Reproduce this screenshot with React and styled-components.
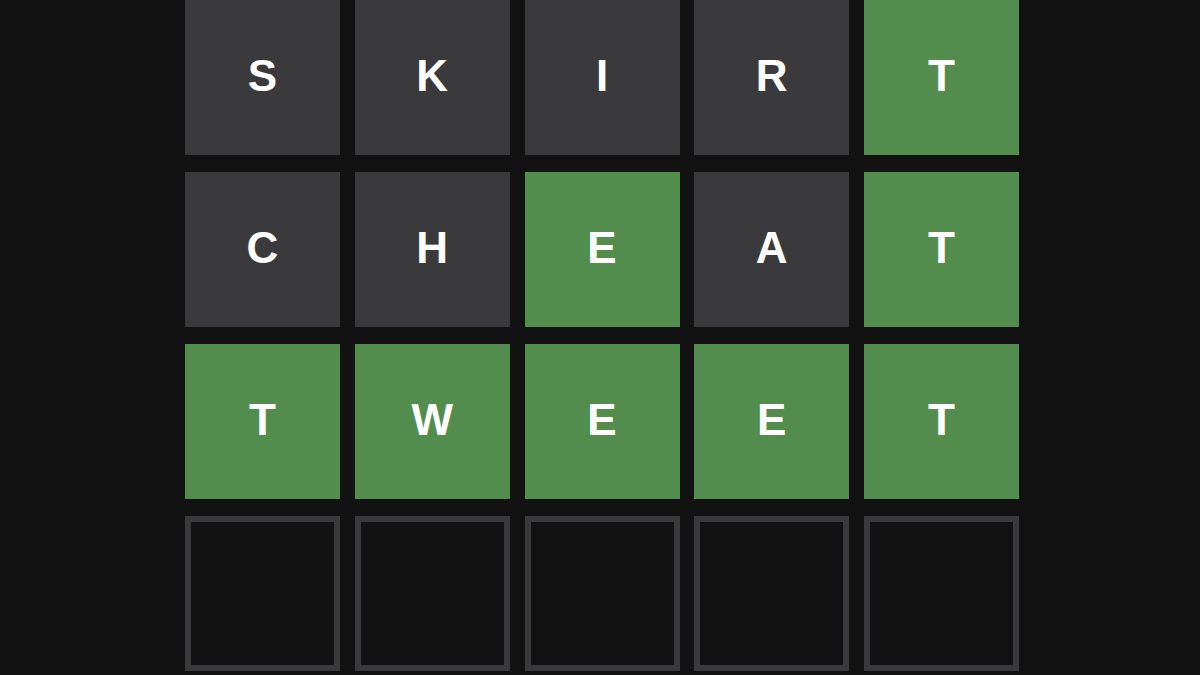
import React from "react";
import styled, { createGlobalStyle } from "styled-components";

const Global = createGlobalStyle`
  html, body { margin: 0; padding: 0; background: #121213; }
  body { width: 1200px; height: 675px; overflow: hidden; }
`;

const Page = styled.div`
  width: 1200px;
  height: 675px;
  background: #121213;
  padding-left: 185px;
  box-sizing: border-box;
`;

const Board = styled.div`
  display: grid;
  grid-template-columns: repeat(5, 155px);
  grid-auto-rows: 155px;
  column-gap: 14.75px;
  row-gap: 17px;
`;

const colors = {
  absent: "#3a3a3c",
  correct: "#538d4e",
};

const Tile = styled.div`
  box-sizing: border-box;
  display: flex;
  align-items: center;
  justify-content: center;
  background: ${(p) => (p.$state ? colors[p.$state] : "transparent")};
  border: ${(p) => (p.$state ? "none" : "6px solid #3a3a3c")};
  color: #ffffff;
  font-family: "Liberation Sans", Arial, sans-serif;
  font-weight: 700;
  font-size: 44px;
  line-height: 1;
  padding-bottom: 4px;
`;

const rows = [
  [["S", "absent"], ["K", "absent"], ["I", "absent"], ["R", "absent"], ["T", "correct"]],
  [["C", "absent"], ["H", "absent"], ["E", "correct"], ["A", "absent"], ["T", "correct"]],
  [["T", "correct"], ["W", "correct"], ["E", "correct"], ["E", "correct"], ["T", "correct"]],
  [["", null], ["", null], ["", null], ["", null], ["", null]],
];

export default function App() {
  return (
    <>
      <Global />
      <Page>
        <Board>
          {rows.flat().map(([l, s], i) => (
            <Tile key={i} $state={s}>
              {l}
            </Tile>
          ))}
        </Board>
      </Page>
    </>
  );
}
